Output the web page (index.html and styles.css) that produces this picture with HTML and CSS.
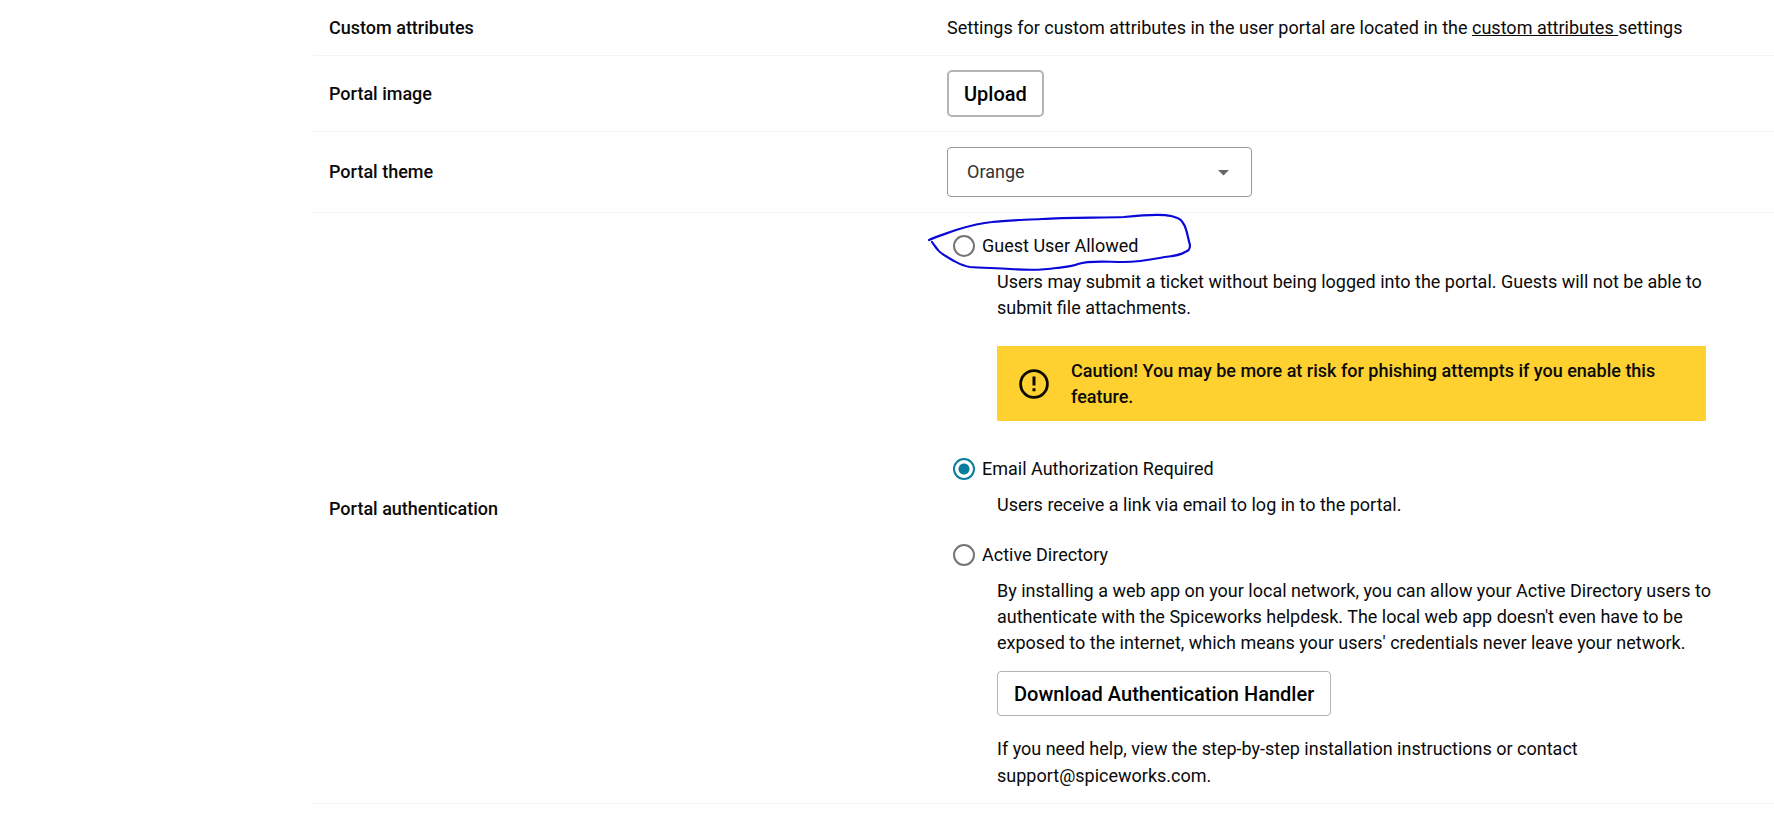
FILE: index.html
```html
<!DOCTYPE html>
<html lang="en">
<head>
<meta charset="utf-8">
<title>User portal settings</title>
<link rel="stylesheet" href="styles.css">
</head>
<body>
<main class="settings">
  <section class="row row-first">
    <h2 class="row-label">Custom attributes</h2>
    <p class="row-content">Settings for custom attributes in the user portal are located in the <a class="link" href="#">custom attributes </a>settings</p>
  </section>
  <section class="row">
    <h2 class="row-label">Portal image</h2>
    <div class="row-content"><button class="button button-strong" type="button">Upload</button></div>
  </section>
  <section class="row row-theme">
    <h2 class="row-label"><label for="theme">Portal theme</label></h2>
    <div class="row-content">
      <div class="select-wrap">
        <select class="select" id="theme"><option>Orange</option></select>
        <svg class="select-arrow" width="11" height="6" viewBox="0 0 11 6" aria-hidden="true"><path d="M0 0h11L5.5 5.5z" fill="#666"/></svg>
      </div>
    </div>
  </section>
  <section class="row row-auth">
    <h2 class="row-label" id="auth">Portal authentication</h2>
    <div class="row-content options" role="radiogroup" aria-labelledby="auth">
      <div class="option">
        <label class="option-head"><input class="radio" type="radio" name="auth">Guest User Allowed</label>
        <svg class="marker" width="266" height="60" viewBox="0 0 266 60" aria-hidden="true" fill="none" stroke="#0a08d8" stroke-width="2.2" stroke-linecap="round" stroke-linejoin="round"><path d="M2 26C8 23 18 20 29 16C42 12 52 9 65 8C80 6 98 6 115 5C140 3 175 4 197 3C216 1 236 0 244 2C251 4 254 5 256 9C260 14 261 25 263 31C263 36 261 37 258 38C252 42 245 42 238 43C222 46 213 48 196 48C180 48 163 46 151 50C144 53 135 53 129 54C117 56 98 56 83 55C70 54 54 54 43 53C36 52 31 49 27 47C20 43 13 39 11 36C8 32 7 31 5 28"/></svg>
        <div class="option-body">
          <p class="text">Users may submit a ticket without being logged into the portal. Guests will not be able to submit file attachments.</p>
          <div class="caution" role="note">
            <svg class="caution-icon" width="30" height="30" viewBox="0 0 30 30" aria-hidden="true"><circle cx="15" cy="15" r="13.4" fill="none" stroke="#0c0a00" stroke-width="2.8"/><path d="M13.5 7.5h3v9h-3zM13.5 19.3h3v3h-3z" fill="#0c0a00"/></svg>
            <p class="caution-text">Caution! You may be more at risk for phishing attempts if you enable this feature.</p>
          </div>
        </div>
      </div>
      <div class="option">
        <label class="option-head"><input class="radio" type="radio" name="auth" checked>Email Authorization Required</label>
        <div class="option-body">
          <p class="text">Users receive a link via email to log in to the portal.</p>
        </div>
      </div>
      <div class="option">
        <label class="option-head"><input class="radio" type="radio" name="auth">Active Directory</label>
        <div class="option-body">
          <p class="text">By installing a web app on your local network, you can allow your Active Directory users to authenticate with the Spiceworks helpdesk. The local web app doesn't even have to be exposed to the internet, which means your users' credentials never leave your network.</p>
          <button class="button download" type="button">Download Authentication Handler</button>
          <p class="help">If you need help, view the step-by-step installation instructions or contact support@spiceworks.com.</p>
        </div>
      </div>
    </div>
  </section>
</main>
</body>
</html>
```
FILE: styles.css
```css
* {
  box-sizing: border-box;
}

body {
  margin: 0;
  background: #fff;
  color: #0a0a0a;
  font: 18px/26px Roboto, "Liberation Sans", sans-serif;
}

h2,
p {
  margin: 0;
}

.settings {
  margin-left: 313px;
}

.row {
  display: grid;
  grid-template-columns: 23fr 30fr;
  align-items: center;
  padding: 14px 0;
  border-bottom: 1px solid #f4f4f4;
}

.row-first,
.row-auth {
  padding-top: 15px;
}

.row-theme {
  padding: 15px 0;
}

.row-label {
  padding-left: 16px;
  font-size: 18px;
  font-weight: 500;
}

.link {
  color: inherit;
  text-decoration: underline;
  white-space: pre-wrap;
}

.button {
  display: block;
  height: 45px;
  padding: 0 16px;
  border: 1px solid #b4b4b4;
  border-radius: 4px;
  background: #fff;
  color: #000;
  font: 500 20px/26px Roboto, "Liberation Sans", sans-serif;
}

.button-strong {
  height: 47px;
  padding: 0 15px;
  border-width: 2px;
  border-radius: 5px;
}

.select-wrap {
  position: relative;
  width: 305px;
}

.select {
  display: block;
  appearance: none;
  width: 100%;
  height: 50px;
  padding: 0 40px 0 19px;
  border: 1px solid #999;
  border-radius: 4px;
  background: #fff;
  color: #333;
  font: 18px/26px Roboto, "Liberation Sans", sans-serif;
}

.select-arrow {
  position: absolute;
  top: 23px;
  right: 23px;
  pointer-events: none;
}

.options {
  display: flex;
  flex-direction: column;
  gap: 19px;
  padding-right: 58px;
}

.option {
  position: relative;
}

.option-head {
  display: flex;
  align-items: center;
  gap: 7px;
  height: 36px;
  padding-left: 6px;
}

.radio {
  appearance: none;
  width: 22px;
  height: 22px;
  margin: 0;
  border: 2px solid #757575;
  border-radius: 50%;
  background: #fff;
}

.radio:checked {
  border-color: #087e9c;
  background: radial-gradient(circle, #087e9c 5px, #fff 6px);
}

.marker {
  position: absolute;
  top: -14px;
  left: -20px;
  overflow: visible;
  pointer-events: none;
}

.option-body {
  padding: 5px 0 0 50px;
}

.caution {
  display: flex;
  align-items: center;
  gap: 22px;
  margin: 25px 10px 11px 0;
  padding: 12px 22px 11px;
  border-radius: 1px;
  background: #fed130;
}

.caution-icon {
  flex: none;
}

.caution-text {
  font-weight: 500;
}

.download {
  margin: 15px 0 19px;
}

.help {
  line-height: 27px;
}
```
